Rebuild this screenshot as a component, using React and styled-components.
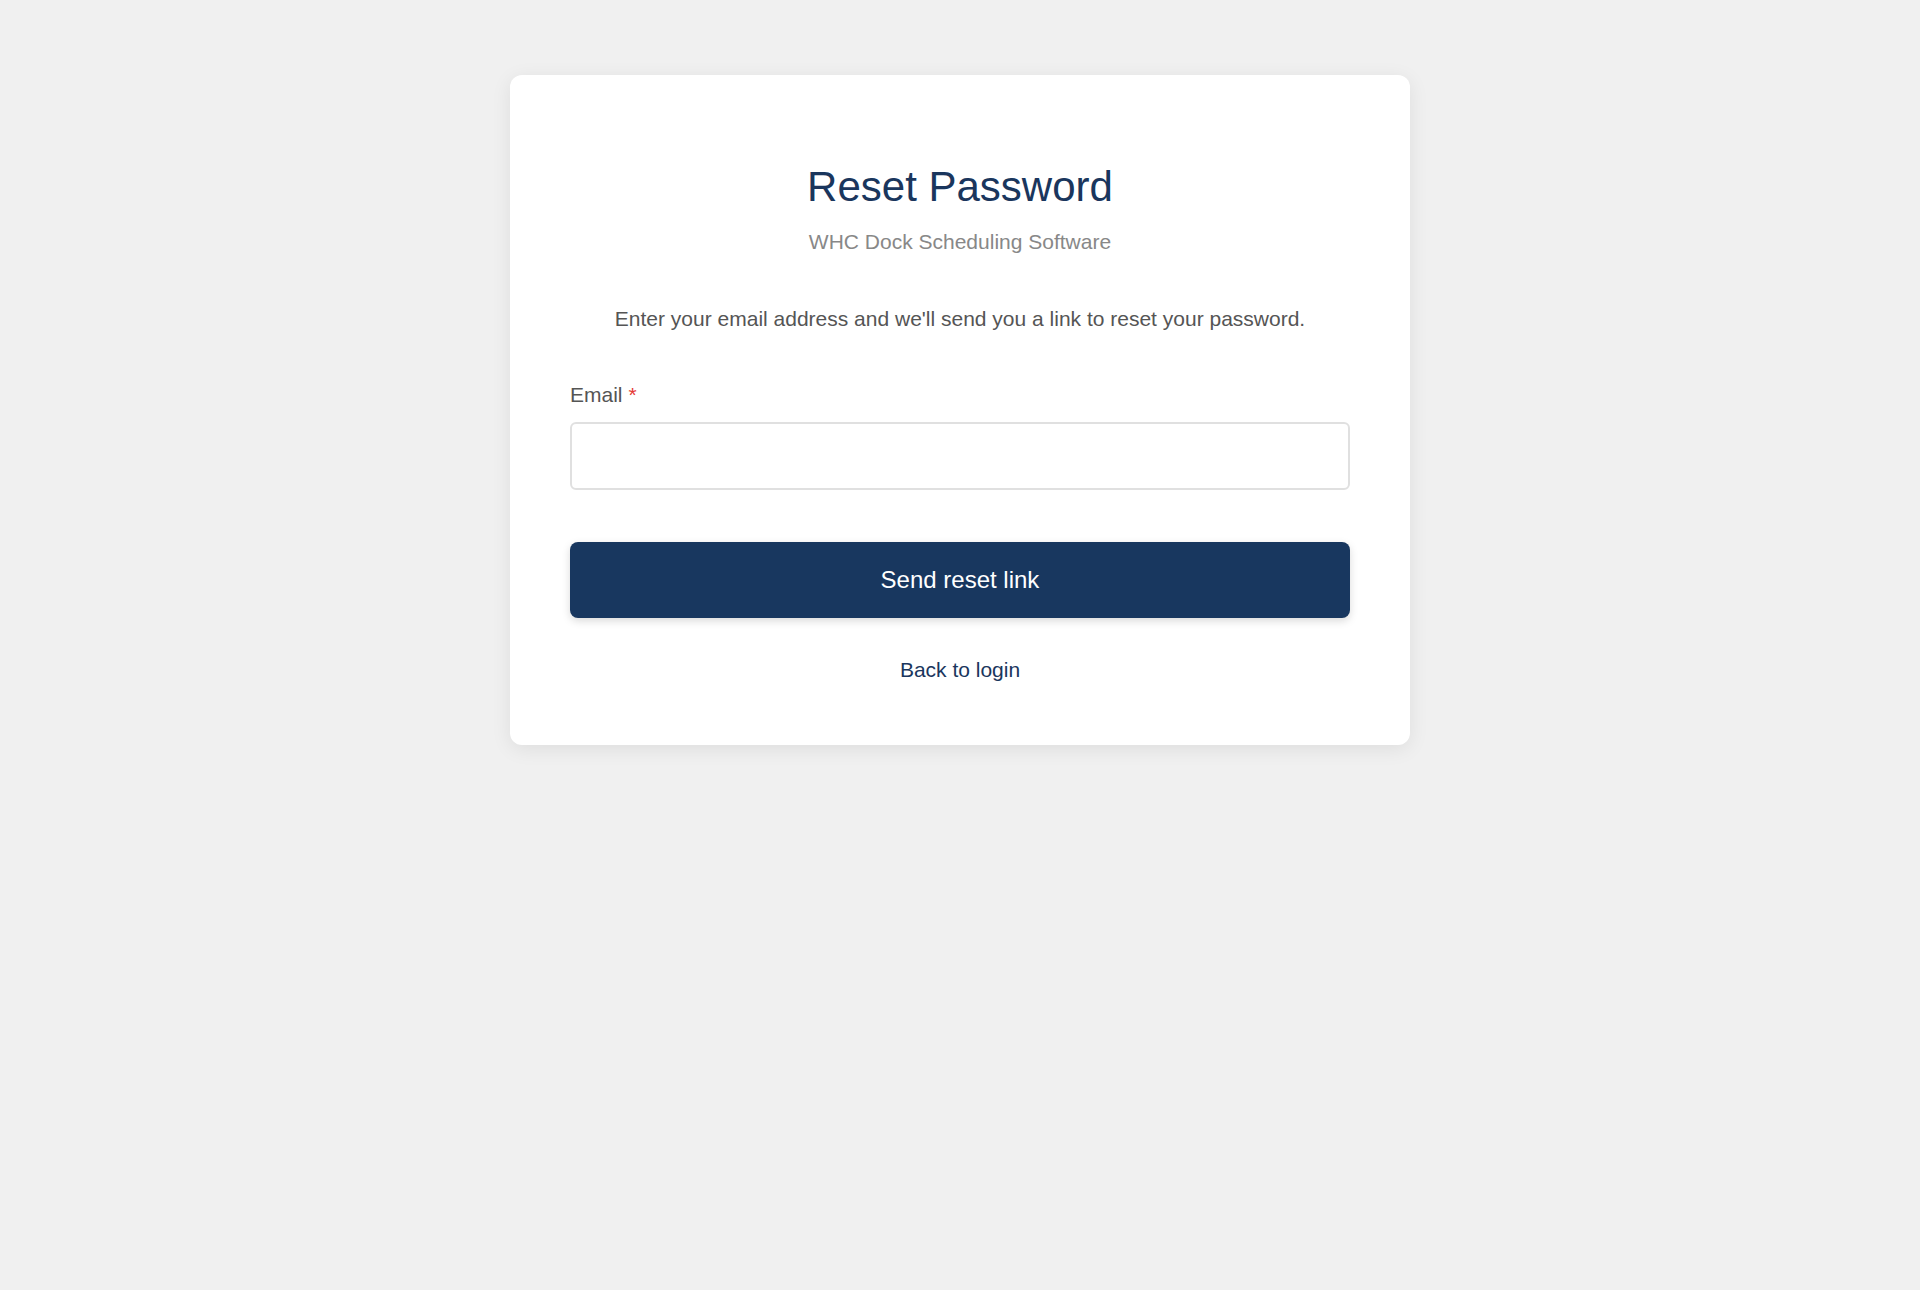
import React from "react";
import styled, { createGlobalStyle } from "styled-components";

const Global = createGlobalStyle`
  html, body { margin: 0; padding: 0; background: #f0f0f0; }
  body { font-family: "Liberation Sans", Arial, sans-serif; min-height: 1290px; }
  * { box-sizing: border-box; }
`;

const Page = styled.div`
  display: flex;
  justify-content: center;
  align-items: flex-start;
  padding-top: 75px;
  min-height: 1290px;
  background: #f0f0f0;
`;

const Card = styled.div`
  width: 900px;
  background: #ffffff;
  border-radius: 12px;
  box-shadow: 0 4px 20px rgba(0, 0, 0, 0.08);
  padding: 87px 60px 63px;
  display: flex;
  flex-direction: column;
`;

const Title = styled.h1`
  margin: 0;
  font-size: 42px;
  line-height: 50px;
  font-weight: 400;
  color: #1a365d;
  text-align: center;
`;

const Subtitle = styled.p`
  margin: 17px 0 0;
  font-size: 21px;
  line-height: 25px;
  color: #888888;
  text-align: center;
`;

const Description = styled.p`
  margin: 52px 0 0;
  font-size: 21px;
  line-height: 25px;
  color: #555555;
  text-align: center;
`;

const Field = styled.div`
  margin-top: 51px;
  display: flex;
  flex-direction: column;
  gap: 15px;
`;

const Label = styled.label`
  font-size: 21px;
  line-height: 25px;
  color: #555555;
`;

const Required = styled.span`
  color: #e53935;
  margin-left: 6px;
`;

const Input = styled.input`
  height: 68px;
  width: 100%;
  border: 2px solid #e0e0e0;
  border-radius: 6px;
  padding: 0 18px;
  font-size: 21px;
  font-family: inherit;
  outline: none;
  background: #fff;
`;

const Button = styled.button`
  margin-top: 52px;
  height: 76px;
  width: 100%;
  border: none;
  border-radius: 8px;
  background: #18375f;
  color: #ffffff;
  font-size: 24px;
  font-family: inherit;
  box-shadow: 0 3px 8px rgba(0, 0, 0, 0.15);
  cursor: pointer;
  display: flex;
  align-items: center;
  justify-content: center;
`;

const BackLink = styled.a`
  margin-top: 39px;
  align-self: center;
  font-size: 21px;
  line-height: 25px;
  color: #1a365d;
  text-decoration: none;
`;

export default function App() {
  return (
    <>
      <Global />
      <Page>
        <Card>
          <Title>Reset Password</Title>
          <Subtitle>WHC Dock Scheduling Software</Subtitle>
          <Description>
            Enter your email address and we'll send you a link to reset your password.
          </Description>
          <Field>
            <Label htmlFor="email">
              Email<Required>*</Required>
            </Label>
            <Input id="email" type="email" />
          </Field>
          <Button type="button">Send reset link</Button>
          <BackLink href="#">Back to login</BackLink>
        </Card>
      </Page>
    </>
  );
}
